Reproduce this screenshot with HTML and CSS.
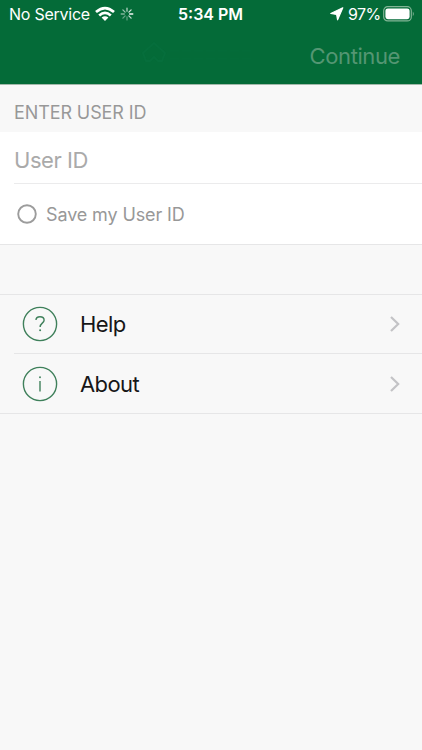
FILE: index.html
```html
<!DOCTYPE html>
<html lang="en">
<head>
<meta charset="utf-8">
<title>Enter User ID</title>
<link rel="stylesheet" href="styles.css">
</head>
<body>
<header class="header">
  <div class="status">
    <div class="status-left">
      <span class="carrier">No Service</span>
      <svg class="wifi" width="20" height="16" viewBox="0 0 20 16" fill="none" stroke="#fff" stroke-width="2.7"><path d="M1 6.1Q10-1.9 19 6.1M4.2 9.4Q10 4.3 15.8 9.4"/><path d="M6.6 11.6Q10 8.7 13.4 11.6L10 15Z" fill="#fff" stroke="none"/></svg>
      <svg class="spinner" width="14" height="14" viewBox="0 0 14 14" stroke="#fff" stroke-width="1.3" stroke-linecap="round"><path d="M9.6 7h3.2" opacity=".95"/><path d="M8.9 5.1l2.2-2.2" opacity=".8"/><path d="M7 4.2V1.1" opacity=".7"/><path d="M5.1 5.1L2.9 2.9" opacity=".6"/><path d="M4.3 7H1.2" opacity=".5"/><path d="M5.1 8.9l-2.2 2.2" opacity=".4"/><path d="M7 9.8v3.1" opacity=".35"/><path d="M8.9 8.9l2.2 2.2" opacity=".75"/></svg>
    </div>
    <span class="time">5:34 PM</span>
    <div class="status-right">
      <svg class="location" width="14" height="14" viewBox="0 0 14 14"><path d="M12.8.8L7.6 12.8 6.6 7.5.8 6.5Z" fill="#fff" stroke="#fff" stroke-linejoin="round" stroke-width="1.2"/></svg>
      <span class="percent">97%</span>
      <svg class="battery" width="32" height="16" viewBox="0 0 32 16"><rect x=".7" y=".7" width="27.6" height="14.2" rx="4" fill="none" stroke="#82b596" stroke-width="1.2"/><rect x="2.4" y="2.4" width="24.2" height="10.8" rx="2.4" fill="#fff"/><path d="M29.8 5.4q2 2.4 0 4.8z" fill="#82b596"/></svg>
    </div>
  </div>
  <div class="nav">
    <svg class="brand" width="116" height="26" viewBox="0 0 116 26" fill="none" stroke="#066e3c" stroke-width="2"><path d="M2 13L13 3l11 10-3 8h-4l-4-4-4 4H5z"/><path d="M29 11h82M29 19h82" stroke-width="1" stroke-dasharray="9 3" opacity=".6"/></svg>
    <span class="continue">Continue</span>
  </div>
</header>
<main>
  <h1 class="section-label"><span>ENTER USER ID</span></h1>
  <section class="form">
    <div class="field"><span class="placeholder">User ID</span></div>
    <div class="save">
      <svg width="20" height="20" viewBox="0 0 20 20"><circle cx="10" cy="10" r="8.8" fill="none" stroke="#9c9c9c" stroke-width="1.9"/></svg>
      <span class="save-text">Save my User ID</span>
    </div>
  </section>
  <nav class="menu">
    <div class="row">
      <svg class="icon" width="36" height="36" viewBox="0 0 36 36" fill="none" stroke="#3f805b"><circle cx="18" cy="18" r="16.6" stroke-width="1.4"/><path d="M14 14.1C14 11.8 15.7 10.7 18 10.7S22.1 12 22.1 14.2C22.1 17.1 18.1 17.3 18.1 21" stroke-width="1.4"/><circle cx="18.1" cy="24.2" r="1" fill="#3f805b" stroke="none"/></svg>
      <span class="label help">Help</span>
      <svg class="chevron" width="12" height="18" viewBox="0 0 12 18"><path d="M2 2l7.2 7L2 16" fill="none" stroke="#c3c3c6" stroke-width="2.2"/></svg>
    </div>
    <div class="row about-row">
      <svg class="icon" width="36" height="36" viewBox="0 0 36 36" fill="none" stroke="#3f805b"><circle cx="18" cy="18" r="16.6" stroke-width="1.4"/><path d="M18 15v10.4" stroke-width="1.4"/><circle cx="18" cy="11.2" r=".95" fill="#3f805b" stroke="none"/></svg>
      <span class="label about">About</span>
      <svg class="chevron" width="12" height="18" viewBox="0 0 12 18"><path d="M2 2l7.2 7L2 16" fill="none" stroke="#c3c3c6" stroke-width="2.2"/></svg>
    </div>
  </nav>
</main>
</body>
</html>
```
FILE: styles.css
```css
* { box-sizing: border-box; }
body {
  margin: 0;
  min-height: 750px;
  background: #f8f8f8;
  font-family: Inter, "Liberation Sans", sans-serif;
  white-space: nowrap;
}
svg { display: block; flex: none; }
.header {
  height: 85px;
  background: #046b38;
  color: #fff;
  border-bottom: 1px solid #a3b9ab;
}
.status {
  height: 28px;
  display: grid;
  grid-template-columns: 178px 66px 1fr;
  align-items: center;
  font-size: 16px;
}
.status-left { display: flex; align-items: center; padding-left: 9px; }
.carrier { width: 86px; letter-spacing: -0.25px; }
.spinner { margin-left: 5px; }
.time { font-weight: 600; }
.status-right { display: flex; align-items: center; padding-left: 86px; }
.percent { width: 32px; margin: 0 3px 0 4px; letter-spacing: -0.6px; }
.nav {
  height: 56px;
  display: flex;
  align-items: center;
  justify-content: space-between;
  padding: 0 22px 0 141px;
}
.brand { margin-top: -6px; }
.continue { font-size: 22px; letter-spacing: -0.4px; color: #549673; }
.section-label {
  height: 47px;
  margin: 0;
  padding: 8px 14px 0;
  display: flex;
  align-items: center;
  font-size: 18px;
  font-weight: 400;
  letter-spacing: -0.1px;
  color: #989898;
}
.form { background: #fff; border-bottom: 1px solid #e6e6e7; }
.field {
  height: 52px;
  margin-left: 14px;
  padding-top: 4px;
  display: flex;
  align-items: center;
  border-bottom: 1px solid #ebebec;
  font-size: 22px;
  letter-spacing: -0.45px;
  color: #aaa;
}
.save {
  height: 60px;
  display: flex;
  align-items: center;
  gap: 9px;
  padding-left: 17px;
  font-size: 18px;
  letter-spacing: -0.12px;
  color: #989898;
}
.menu {
  margin-top: 49px;
  border-top: 1px solid #e6e6e7;
  border-bottom: 1px solid #e6e6e7;
}
.row { height: 58px; display: flex; align-items: center; padding: 0 21px 0 22px; }
.row + .row {
  height: 60px;
  margin-left: 14px;
  padding-left: 8px;
  border-top: 1px solid #e6e6e7;
}
.label { flex: 1; margin-left: 22px; font-size: 22px; letter-spacing: -0.6px; color: #161617; }
```
